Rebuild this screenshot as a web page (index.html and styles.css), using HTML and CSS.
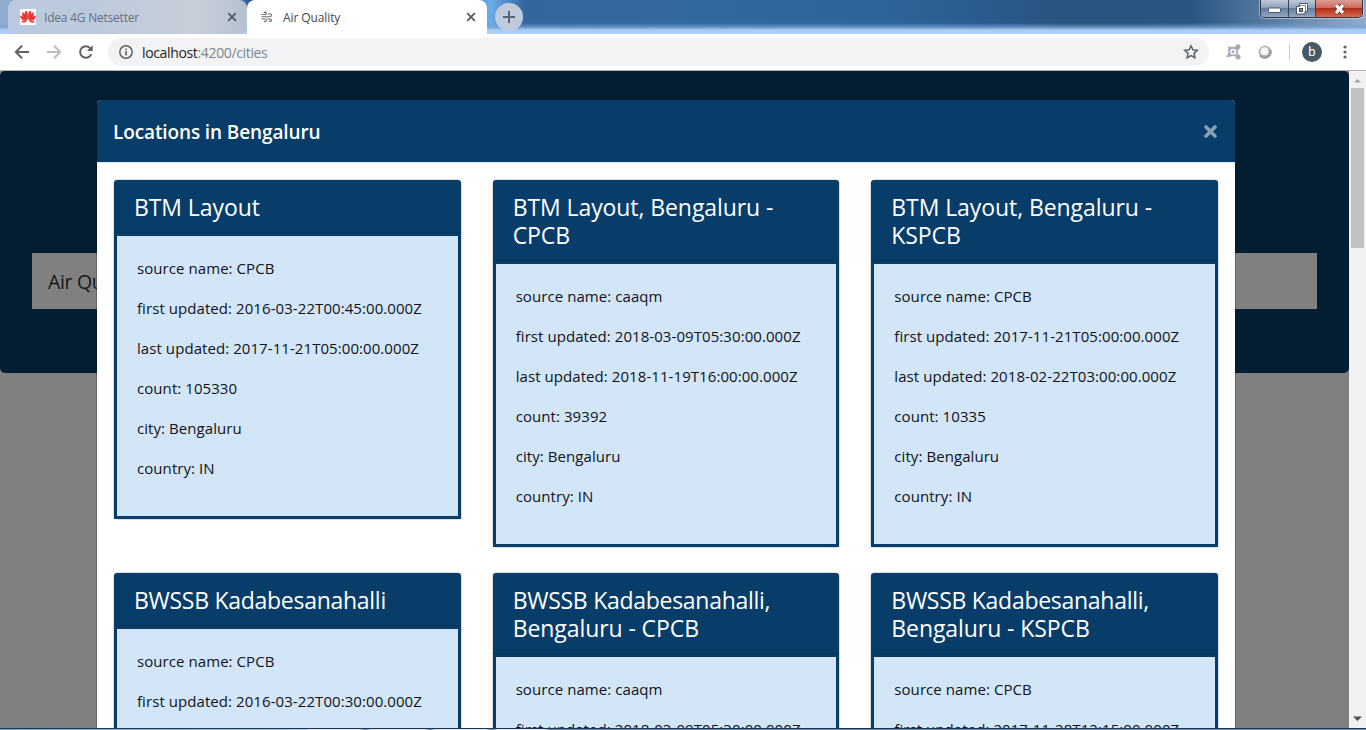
FILE: index.html
```html
<!DOCTYPE html>
<html lang="en">
<head>
<meta charset="utf-8">
<title>Air Quality</title>
<link rel="stylesheet" href="styles.css">
</head>
<body>
<div class="window">
  <header class="tabstrip">
    <div class="tab tab-idle">
      <svg class="favicon" width="16" height="16" viewBox="0 0 16 16"><rect width="16" height="16" fill="#fff"/><g fill="#ee3339"><path d="M7.700 11C4.800 8 3.900 4 5.700 1.500C7.900 2.400 8.200 6 7.700 11z"/><path d="M8.300 11C7.800 6 8.100 2.400 10.300 1.500C12.100 4 11.200 8 8.300 11z"/><path d="M7.200 11.400C3.600 9.500 1.400 6.500 2.300 3.300C5 4 6.900 7.500 7.200 11.400z"/><path d="M8.800 11.400C9.100 7.500 11 4 13.700 3.300C14.600 6.500 12.400 9.500 8.800 11.400z"/><path d="M6.900 12C2.900 12 .200 9.800 0 6.500C3 7 5.600 9 6.900 12z"/><path d="M9.100 12C10.400 9 13 7 16 6.500C15.800 9.800 13.100 12 9.100 12z"/><path d="M6.700 12.100C5 14.300 2.300 14.300 1 11.800z"/><path d="M9.300 12.100C11 14.300 13.700 14.300 15 11.800z"/></g></svg>
      <span class="tab-title">Idea 4G Netsetter</span>
      <svg class="tab-close" width="10" height="10" viewBox="0 0 10 10"><path d="M1.200 1.200L8.800 8.800M8.800 1.200L1.200 8.800"/></svg>
    </div>
    <div class="tab tab-active">
      <svg class="wind" width="14" height="14" viewBox="0 0 14 14"><path d="M1.500 4.500h3.700a1.200 1.200 0 1 0-1.200-1.500M1.500 6.800h8.500a1.500 1.500 0 1 0-1.500-2M1.500 9h3.700a1.300 1.300 0 1 1-1.200 1.900M7.300 9h3a1.200 1.200 0 1 1-1.100 1.700"/></svg>
      <span class="tab-title">Air Quality</span>
      <svg class="tab-close" width="10" height="10" viewBox="0 0 10 10"><path d="M1.200 1.200L8.800 8.800M8.800 1.200L1.200 8.800"/></svg>
    </div>
    <div class="new-tab"><svg width="12" height="12" viewBox="0 0 12 12"><path d="M6 0v12M0 6h12"/></svg></div>
    <div class="controls">
      <div class="control"><svg width="13" height="7" viewBox="0 0 13 7"><rect x=".5" y="1" width="12" height="4.500" rx="1" fill="#fff" stroke="#4c5668"/></svg></div>
      <div class="control"><svg width="12" height="12" viewBox="0 0 12 12"><path d="M3.500.500h8v8h-2.500v2.500H.500V3.500h3z" fill="#fff" stroke="#48566b"/><path d="M3.500 2.500H9.500V8.500" fill="none" stroke="#48566b" stroke-width=".7"/><rect x="3.500" y="5.500" width="3" height="3" fill="#8d9bb0" stroke="#38465b"/></svg></div>
      <div class="control control-close"><svg width="13" height="12" viewBox="0 0 13 12"><path d="M3 2.200L10 9.800M10 2.200L3 9.800" stroke="#603638" stroke-width="5"/><path d="M3 2.200L10 9.800M10 2.200L3 9.800" stroke="#fff" stroke-width="3.200"/></svg></div>
    </div>
  </header>

  <nav class="toolbar">
    <svg class="nav-icon" width="16" height="16" viewBox="0 0 16 16"><path d="M15 8H2M8 1.800L1.800 8L8 14.200"/></svg>
    <svg class="nav-icon nav-off" width="16" height="16" viewBox="0 0 16 16"><path d="M1 8h13M8 1.800L14.200 8L8 14.200"/></svg>
    <svg class="nav-icon" width="16" height="16" viewBox="0 0 16 16"><path d="M13.300 10.200A5.800 5.800 0 1 1 12.400 4.300"/><path d="M14.700 1.200v5.800H8.900z" fill="#5f6368" stroke="none"/></svg>
    <div class="omnibox">
      <svg width="14" height="14" viewBox="0 0 14 14"><circle cx="7" cy="7" r="6.200" fill="none" stroke="#5f6368" stroke-width="1.500"/><path d="M7 6v4.500M7 3.500v1.600" stroke="#5f6368" stroke-width="1.600"/></svg>
      <span class="url"><b>localhost</b>:4200/cities</span>
      <svg class="star" width="16" height="16" viewBox="0 0 16 16"><path d="M8 1.800l1.850 4.050 4.450.500-3.300 3 .900 4.400L8 11.500l-3.900 2.250.900-4.400-3.300-3 4.450-.500z"/></svg>
    </div>
    <svg class="ext-a" width="16" height="16" viewBox="0 0 16 16"><g fill="#a9aab9"><path d="M3 2.500L10 3L13 1L14.500 3.500L12.500 7L14 13L8 12L1 13.500L3.500 9z"/><circle cx="13" cy="2.800" r="2.500"/><circle cx="13" cy="13" r="2.500"/></g><circle cx="8" cy="7.700" r="2.200" fill="none" stroke="#fff" stroke-width="1.300"/><path d="M10.300 5.500v4.500h1.400" fill="none" stroke="#fff"/></svg>
    <svg class="ext-b" width="14" height="14" viewBox="0 0 14 14"><circle cx="7" cy="7" r="6.400" fill="#b5b5b5"/><path d="M2.300 10.500A5.800 5.800 0 0 0 12.300 5" fill="none" stroke="#969696" stroke-width="2"/><circle cx="6.500" cy="6.300" r="4" fill="#f7f7f7"/></svg>
    <i class="divider"></i>
    <span class="avatar">b</span>
    <svg class="dots" width="4" height="14" viewBox="0 0 4 14"><circle cx="2" cy="2" r="1.600"/><circle cx="2" cy="7" r="1.600"/><circle cx="2" cy="12" r="1.600"/></svg>
  </nav>

  <div class="viewport">
    <div class="page">
      <section class="jumbotron"><div class="search">Air Quality</div></section>
      <div class="modal">
        <div class="modal-header">
          <h1 class="modal-title">Locations in Bengaluru</h1>
          <svg class="modal-close" width="13" height="13" viewBox="0 0 13 13"><path d="M2 2l9 9M11 2l-9 9"/></svg>
        </div>
        <div class="modal-body">
          <article class="card">
            <h2 class="card-title">BTM Layout</h2>
            <div class="card-body"><p>source name: CPCB</p><p>first updated: 2016-03-22T00:45:00.000Z</p><p>last updated: 2017-11-21T05:00:00.000Z</p><p>count: 105330</p><p>city: Bengaluru</p><p>country: IN</p></div>
          </article>
          <article class="card">
            <h2 class="card-title">BTM Layout, Bengaluru -<br>CPCB</h2>
            <div class="card-body"><p>source name: caaqm</p><p>first updated: 2018-03-09T05:30:00.000Z</p><p>last updated: 2018-11-19T16:00:00.000Z</p><p>count: 39392</p><p>city: Bengaluru</p><p>country: IN</p></div>
          </article>
          <article class="card">
            <h2 class="card-title">BTM Layout, Bengaluru -<br>KSPCB</h2>
            <div class="card-body"><p>source name: CPCB</p><p>first updated: 2017-11-21T05:00:00.000Z</p><p>last updated: 2018-02-22T03:00:00.000Z</p><p>count: 10335</p><p>city: Bengaluru</p><p>country: IN</p></div>
          </article>
          <article class="card">
            <h2 class="card-title"><span class="tight">BWSSB Kadabesanahalli</span></h2>
            <div class="card-body"><p>source name: CPCB</p><p>first updated: 2016-03-22T00:30:00.000Z</p></div>
          </article>
          <article class="card">
            <h2 class="card-title"><span class="tight">BWSSB Kadabesanahalli,</span><br>Bengaluru - CPCB</h2>
            <div class="card-body"><p>source name: caaqm</p><p>first updated: 2018-03-09T05:30:00.000Z</p></div>
          </article>
          <article class="card">
            <h2 class="card-title"><span class="tight">BWSSB Kadabesanahalli,</span><br>Bengaluru - KSPCB</h2>
            <div class="card-body"><p>source name: CPCB</p><p>first updated: 2017-11-28T12:15:00.000Z</p></div>
          </article>
        </div>
      </div>
    </div>
    <div class="scrollbar">
      <svg width="9" height="5" viewBox="0 0 9 5"><path d="M1 4.500L4.500 1L8 4.500z" fill="#a3a3a3"/></svg>
      <i class="thumb"></i>
      <svg class="down" width="9" height="5" viewBox="0 0 9 5"><path d="M0 .500L4.500 5L9 .500z" fill="#505050"/></svg>
    </div>
  </div>
  <footer class="taskbar-edge"></footer>
</div>
</body>
</html>
```

FILE: styles.css
```css
* { box-sizing: border-box; }
body { margin: 0; overflow: hidden; font-family: "Open Sans", "Noto Sans", sans-serif; }
svg { display: block; flex: none; }
.window { width: 1366px; height: 730px; display: flex; flex-direction: column; overflow: hidden; }

.tabstrip {
  height: 34px; flex: none; display: flex; position: relative; padding-left: 8px;
  background:
    linear-gradient(180deg, transparent 23px, #76a2d2b0 27px, #a9ccf2 30px, #add0f5 34px),
    linear-gradient(90deg, #8fabce 0, #95b0d2 230px, #1e5191 250px, #4d8fd0 480px, #6aaeea 490px, #34659f 525px, #34699f 680px, #2f649b 880px, #285481 1060px, #285582 1190px, #53779f 1260px, #91adcc 1366px);
}
.tab { display: flex; align-items: center; height: 34px; font-size: 12px; }
.tab-title { letter-spacing: -0.1px; white-space: nowrap; }
.tab-idle { width: 239px; padding: 0 10px 0 12px; color: #65707f; border-radius: 8px 8px 8px 0; background: linear-gradient(90deg, #bac9dd, #bccadd 35%, #c8ced9 78%, #b5c1d1); }
.tab-idle .tab-title { letter-spacing: -0.220px; }
.favicon { margin-right: 8px; }
.tab-close { margin-left: auto; fill: none; stroke: #505862; stroke-width: 1.700; }
.tab-active { width: 240px; padding: 0 11px 0 13px; background: #fff; color: #45494e; border-radius: 8px 8px 0 0; }
.wind { margin-right: 9px; fill: none; stroke: #6c6c6c; stroke-width: 1.100; }
.new-tab { width: 28px; height: 28px; margin: 3px 0 0 8px; border-radius: 50%; background: #bfcbdd; display: grid; place-items: center; }
.new-tab path { stroke: #556376; stroke-width: 2; }
.controls { display: flex; width: 103px; height: 18px; margin: 0 3px 0 auto; border: 1px solid #2d3949; border-top: 0; border-radius: 0 0 5px 5px; box-shadow: 0 0 0 1px #ffffff66; }
.control { width: 28px; height: 17px; display: flex; align-items: center; justify-content: center; border-right: 1px solid #37465a; background: linear-gradient(#bdcada, #8da0b8 48%, #667e9c 50%, #91a8c3); }
.control:first-child { border-radius: 0 0 0 4px; }
.control:first-child svg { margin-top: 4px; }
.control:nth-child(2) { width: 27px; }
.control-close { flex: 1; border-right: 0; border-radius: 0 0 4px; background: linear-gradient(#dc9c91, #cc6859 48%, #b52c18 50%, #d46b4c); }

.toolbar { height: 36px; flex: none; display: flex; align-items: center; background: #fff; padding-left: 14px; }
.nav-icon { margin-right: 16px; fill: none; stroke: #5f6368; stroke-width: 2; }
.nav-off { stroke: #bcbec0; }
.omnibox { width: 1101px; height: 28px; margin-left: -2px; padding: 0 10px 0 11px; display: flex; align-items: center; border-radius: 14px; background: #f1f3f4; }
.url { margin-left: 9px; font-size: 14px; color: #80868b; letter-spacing: -0.350px; }
.url b { font-weight: 400; color: #202124; }
.star { margin-left: auto; fill: none; stroke: #5f6368; stroke-width: 1.500; }
.ext-a { margin-left: 16px; }
.ext-b { margin-left: 17px; }
.divider { width: 1px; height: 16px; margin-left: 17px; background: #cacccf; }
.avatar { width: 20px; height: 20px; margin-left: 12px; border-radius: 50%; background: #455a64; color: #fff; font: 13px/19px Roboto, sans-serif; text-align: center; }
.dots { margin-left: 21px; fill: #5f6368; }

.viewport { height: 658px; flex: none; display: flex; border-top: 1px solid #b6b4b0; }
.page { width: 1349px; position: relative; overflow: hidden; background: #808080; }
.jumbotron { height: 302px; padding: 182px 32px 0; border-radius: 5px; background: #031e33; }
.search { height: 56px; padding-left: 16px; background: #808080; color: #161616; font-size: 19.500px; font-weight: 400; line-height: 58px; letter-spacing: -0.350px; }
.modal { position: absolute; left: 96px; top: 28px; width: 1140px; border: 1px solid rgba(0,0,0,.2); border-radius: 5px; background: #fff; background-clip: padding-box; }
.modal-header { height: 63px; padding: 0 18px 0 16px; display: flex; align-items: center; justify-content: space-between; border-bottom: 1px solid #e2e6ea; border-radius: 4px 4px 0 0; background: #093d69; background-clip: padding-box; }
.modal-title { margin: 1px 0 0; color: #fff; font-size: 19px; font-weight: 600; letter-spacing: -0.120px; }
.modal-close { margin-top: 1px; }
.modal-close path { fill: none; stroke: #849eb4; stroke-width: 3.600; stroke-linecap: round; }
.modal-body { padding: 16px; display: grid; grid-template-columns: repeat(3, 348.670px); column-gap: 30px; row-gap: 24px; align-items: start; }
.card { border: 1px solid rgba(0,0,0,.125); border-radius: 4px; background-clip: padding-box; }
.card-title { margin: 0; padding: 13px 20px 11px; background: #093d69; color: #fff; font-size: 23px; line-height: 28px; font-weight: 400; letter-spacing: -0.080px; border-bottom: 1px solid #083459; border-radius: 3px 3px 0 0; white-space: nowrap; }
.tight { letter-spacing: -0.280px; }
.card-body { padding: 20px; border: 3px solid #093d69; background: #d3e6f7; }
.card-body p { margin: 0 0 16px; color: #10121c; font-size: 15px; line-height: 24px; letter-spacing: 0.070px; white-space: nowrap; }

.scrollbar { width: 17px; padding: 7px 0 7px; display: flex; flex-direction: column; align-items: center; background: #f1f1f1; }
.thumb { width: 13px; height: 160px; margin-top: 5px; background: #c1c1c1; }
.down { margin-top: auto; }
.taskbar-edge { height: 2px; flex: none; border-top: 1px solid #1b3956; background: linear-gradient(90deg, #79a9ca 0, #a9c8dd 307px, #dfe5ee 308px, #dfe5ee 360px, #6480a5 365px, #dfe5ee 372px, #dfe5ee 425px, #6480a5 430px, #dfe5ee 436px, #dfe5ee 485px, #6480a5 492px, #dfe5ee 497px, #dfe5ee 545px, #6480a5 551px, #7895bb); }
```
